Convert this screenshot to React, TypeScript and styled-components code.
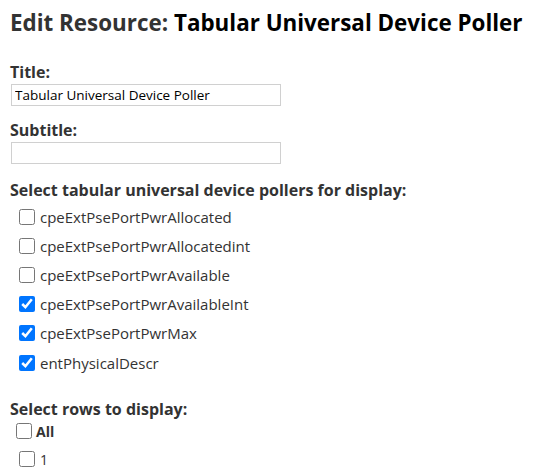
import React from 'react';
import styled, {createGlobalStyle} from 'styled-components';

const GlobalStyle = createGlobalStyle`
    body {
        margin: 0;
        background: #fff;
        font-family: "Open Sans", "Liberation Sans", sans-serif;
        color: #333;
    }
`;

const pollers = [
    {name: 'cpeExtPsePortPwrAllocated', checked: false},
    {name: 'cpeExtPsePortPwrAllocatedint', checked: false},
    {name: 'cpeExtPsePortPwrAvailable', checked: false},
    {name: 'cpeExtPsePortPwrAvailableInt', checked: true},
    {name: 'cpeExtPsePortPwrMax', checked: true},
    {name: 'entPhysicalDescr', checked: true},
];

export default function App() {
    return (
        <Page>
            <GlobalStyle/>
            <Heading>
                Edit Resource: <ResourceName>Tabular Universal Device Poller</ResourceName>
            </Heading>

            <Field>
                <Label htmlFor='title'>Title:</Label>
                <TextInput
                    id='title'
                    type='text'
                    defaultValue='Tabular Universal Device Poller'
                />
            </Field>

            <Field>
                <Label htmlFor='subtitle'>Subtitle:</Label>
                <TextInput
                    id='subtitle'
                    type='text'
                    defaultValue=''
                />
            </Field>

            <Section>
                <Label as='div'>Select tabular universal device pollers for display:</Label>
                <CheckList>
                    {pollers.map((p) => (
                        <CheckRow key={p.name}>
                            <Box
                                type='checkbox'
                                defaultChecked={p.checked}
                            />
                            {p.name}
                        </CheckRow>
                    ))}
                </CheckList>
            </Section>

            <Section>
                <Label as='div'>Select rows to display:</Label>
                <AllRow>
                    <Box type='checkbox'/>
                    All
                </AllRow>
                <RowOption>
                    <Box type='checkbox'/>
                    1
                </RowOption>
            </Section>
        </Page>
    );
}

const Page = styled.div`
    padding: 0 10px;
    display: flex;
    flex-direction: column;
`;

const Heading = styled.h1`
    margin: 8px 0 24px;
    font-size: 22.4px;
    line-height: 30px;
    font-weight: 700;
    color: #333;
`;

const ResourceName = styled.span`
    color: #000;
`;

const Field = styled.div`
    display: flex;
    flex-direction: column;
    gap: 2px;
    margin-bottom: 14px;
`;

const Section = styled.div`
    display: flex;
    flex-direction: column;
    margin: 2px 0 20px;
`;

const Label = styled.label`
    font-size: 16px;
    font-weight: 700;
    line-height: 20px;
    color: #333;
`;

const TextInput = styled.input`
    box-sizing: border-box;
    width: 270px;
    height: 22px;
    margin: 0 0 0 1px;
    padding: 1px 3px;
    border: 1px solid #d0d0d0;
    border-radius: 0;
    font-family: "Open Sans", "Liberation Sans", sans-serif;
    font-size: 13.5px;
    color: #000;
    outline: none;
`;

const CheckList = styled.div`
    display: flex;
    flex-direction: column;
    padding: 2px 0 0 9px;
`;

const CheckRow = styled.label`
    display: flex;
    align-items: center;
    gap: 5px;
    height: 29.2px;
    font-size: 15px;
    color: #333;
`;

const Box = styled.input`
    width: 16px;
    height: 16px;
    margin: 0;
`;

const AllRow = styled.label`
    display: flex;
    align-items: center;
    gap: 4px;
    height: 24px;
    padding-left: 6px;
    font-size: 14px;
    font-weight: 700;
    color: #333;
`;

const RowOption = styled.label`
    display: flex;
    align-items: center;
    gap: 5px;
    height: 24px;
    margin-top: 4px;
    padding-left: 9px;
    font-size: 14px;
    color: #333;
`;
